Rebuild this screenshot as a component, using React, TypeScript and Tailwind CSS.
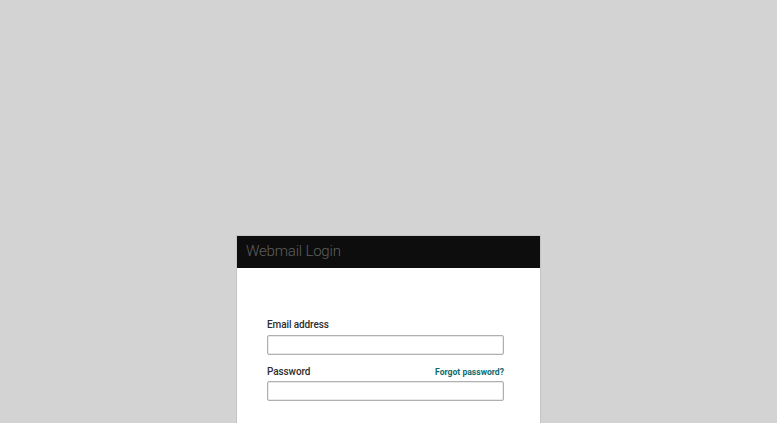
export default function App() {
  return (
    <div className="min-h-screen bg-[#d3d3d3] flex flex-col items-center pt-[235px] font-['Roboto',sans-serif]">
      <div className="w-[305px] border border-[#c4c4c4] bg-white">
        <div className="h-[32px] bg-[#0d0d0d] flex items-center px-[9px]">
          <span className="text-[15px] font-light text-[#5f5f5f] tracking-[-0.2px] -mt-[2px]">Webmail Login</span>
        </div>
        <div className="pt-[51px] pl-[30px] pr-[36px] pb-8">
          <label className="block text-[10px] font-medium text-[#2e2e2e] leading-[12px] tracking-[-0.1px]">Email address</label>
          <input
            type="text"
            className="mt-[4px] block w-[237px] h-[20px] border border-[#b0b0b0] rounded-[2px] bg-white shadow-[inset_0_0_0_0.5px_#d6d6d6]"
          />
          <div className="mt-[11px] flex items-end justify-between w-[237px]">
            <label className="text-[10px] font-medium text-[#2e2e2e] leading-[12px] tracking-[-0.1px]">Password</label>
            <a className="text-[8.6px] font-bold text-[#0f6b70] leading-[11px]">Forgot password?</a>
          </div>
          <input
            type="password"
            className="mt-[3px] block w-[237px] h-[20px] border border-[#b0b0b0] rounded-[2px] bg-white shadow-[inset_0_0_0_0.5px_#d6d6d6]"
          />
        </div>
      </div>
    </div>
  );
}
